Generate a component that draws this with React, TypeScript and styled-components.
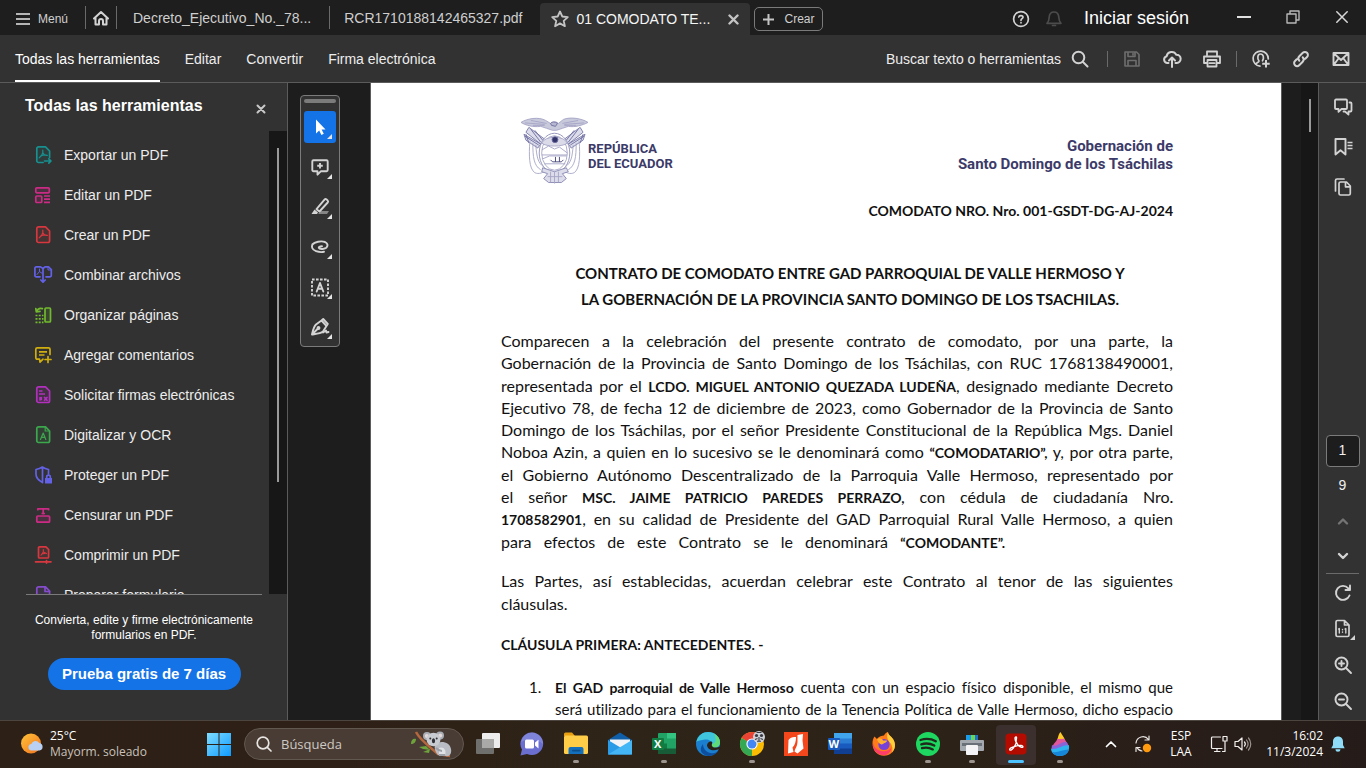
import React from "react";
import styled, { createGlobalStyle } from "styled-components";

const GlobalStyle = createGlobalStyle`
  * { box-sizing: border-box; }
  html, body { margin: 0; padding: 0; background: #1d1d1d; }
  body { font-family: "Liberation Sans", Arial, sans-serif; font-size: 14px; color: #f0f0f0; }
  button, input { font-family: inherit; color: inherit; }
  svg { display: block; flex: none; }
`;

/* ---------- shared pieces ---------- */

type IconProps = {
  w?: number;
  h?: number;
  color?: string;
  sw?: number;
  children: React.ReactNode;
};

const Icon = ({ w = 20, h = 20, color = "#d3d3d3", sw = 2, children }: IconProps) => (
  <svg
    width={w}
    height={h}
    viewBox={`0 0 ${w} ${h}`}
    fill="none"
    stroke={color}
    strokeWidth={sw}
    strokeLinecap="round"
    strokeLinejoin="round"
    aria-hidden="true"
  >
    {children}
  </svg>
);

const PlainButton = styled.button`
  display: flex;
  align-items: center;
  justify-content: center;
  flex: none;
  padding: 0;
  border: 0;
  background: none;
`;

const Screen = styled.div`
  display: flex;
  flex-direction: column;
  height: 100vh;
  overflow: hidden;
`;

/* ---------- title bar ---------- */

const TitleBar = styled.header`
  display: flex;
  align-items: center;
  flex: none;
  height: 35px;
  padding-left: 16px;
  background: #1e1e1e;
`;

const MenuButton = styled(PlainButton)`
  gap: 8px;
  width: 69px;
  height: 35px;
  justify-content: flex-start;
  padding-top: 2px;
  font-size: 12px;
  color: #d0d0d0;
`;

const HomeButton = styled(PlainButton)`
  width: 32px;
  height: 23px;
  border: solid #6a6a6a;
  border-width: 0 1px;
`;

const Tab = styled(PlainButton)`
  align-self: center;
  height: 23px;
  padding: 0 18px 0 14px;
  font-size: 14px;
  color: #cfcfcf;
`;

const DividedTab = styled(Tab)`
  padding-left: 16px;
  border-right: 1px solid #6a6a6a;
`;

const ActiveTab = styled(Tab)`
  align-self: flex-end;
  gap: 7px;
  width: 210px;
  height: 32px;
  padding: 0 11px;
  border-radius: 4px 4px 0 0;
  background: #323232;
  color: #f5f5f5;
`;

const TabName = styled.span`
  flex: 1;
  text-align: left;
  white-space: nowrap;
`;

const CreateButton = styled(PlainButton)`
  gap: 10px;
  width: 69px;
  height: 24px;
  margin: 3px 0 0 4px;
  border: 1px solid #7a7a7a;
  border-radius: 5px;
  font-size: 12px;
  color: #d0d0d0;
`;

const WindowTools = styled.div`
  display: flex;
  align-items: center;
  margin-left: auto;
  height: 35px;
`;

const TitleIcon = styled(PlainButton)`
  width: 33px;
  height: 35px;
  padding-top: 2px;
`;

const WindowButton = styled(PlainButton)`
  width: 49px;
  height: 35px;
  padding-bottom: 2px;
`;

const SignIn = styled(PlainButton)`
  justify-content: flex-start;
  width: 149px;
  padding: 2px 0 0 14px;
  font-size: 18px;
  color: #ffffff;
`;

/* ---------- toolbar ---------- */

const Toolbar = styled.div`
  display: flex;
  align-items: stretch;
  flex: none;
  height: 48px;
  padding: 0 5px 0 15px;
  border-bottom: 1px solid #5b5b5b;
  background: #323232;
`;

const ToolTabs = styled.nav`
  display: flex;
  gap: 25px;
`;

const ToolTab = styled(PlainButton)<{ $active?: boolean }>`
  padding-top: 2px;
  border-bottom: 2px solid ${(p) => (p.$active ? "#ffffff" : "transparent")};
  font-size: 14px;
  color: ${(p) => (p.$active ? "#ffffff" : "#ededed")};
`;

const ToolActions = styled.div`
  display: flex;
  align-items: center;
  margin-left: auto;
`;

const FindButton = styled(PlainButton)`
  gap: 10px;
  margin-right: 14px;
  font-size: 14px;
  color: #ededed;
`;

const ActionButton = styled(PlainButton)`
  width: 40px;
  height: 40px;
`;

const Divider = styled.span`
  width: 1px;
  height: 16px;
  margin: 0 4px;
  background: #6a6a6a;
`;

/* ---------- workspace ---------- */

const Workspace = styled.div`
  display: flex;
  flex: 1;
  min-height: 0;
  background: #1d1d1d;
`;

const Sidebar = styled.aside`
  display: flex;
  flex-direction: column;
  flex: none;
  width: 288px;
  border-right: 1px solid #5b5b5b;
  background: #323232;
`;

const SideHeader = styled.div`
  display: flex;
  justify-content: space-between;
  flex: none;
  height: 48px;
  padding: 13px 20px 0 25px;
`;

const SideTitle = styled.h2`
  margin: 0;
  font-size: 16px;
  line-height: 20px;
  color: #ffffff;
`;

const CloseButton = styled(PlainButton)`
  width: 12px;
  height: 26px;
`;

const SideScroll = styled.div`
  display: flex;
  flex: 1;
  min-height: 0;
  overflow: hidden;
`;

const ToolList = styled.ul`
  flex: 1;
  margin: 0;
  padding: 4px 0 0 34px;
  list-style: none;
`;

const ToolRow = styled(PlainButton)`
  gap: 10px;
  height: 40px;
  font-size: 14px;
  color: #ededed;
`;

const Track = styled.div<{ $w: number; $right: number; $top: number }>`
  display: flex;
  justify-content: flex-end;
  flex: none;
  width: ${(p) => p.$w}px;
  padding: ${(p) => p.$top}px ${(p) => p.$right}px 0 0;
  background: #171717;
`;

const Thumb = styled.span<{ $h: number }>`
  width: 2px;
  height: ${(p) => p.$h}px;
  background: #9a9a9a;
`;

const Promo = styled.div`
  display: flex;
  flex-direction: column;
  align-items: center;
  flex: none;
  height: 126px;
  margin: 0 25px 0 26px;
  border-top: 1px solid #7a7a7a;
`;

const PromoText = styled.p`
  margin: 18px 0 15px;
  font-size: 12px;
  line-height: 15px;
  text-align: center;
  white-space: nowrap;
  color: #ffffff;
`;

const TrialButton = styled(PlainButton)`
  width: 193px;
  height: 32px;
  padding-bottom: 2px;
  border-radius: 16px;
  background: #1473e6;
  font-size: 15px;
  font-weight: 700;
  color: #ffffff;
`;

const Gutter = styled.div`
  flex: none;
  width: 83px;
  padding: 12px 30px 0 12px;
  border-right: 1px solid #5b5b5b;
`;

const Palette = styled.div`
  display: flex;
  flex-direction: column;
  align-items: center;
  gap: 8px;
  width: 40px;
  padding: 3px 0;
  border: 1px solid #7b7b7b;
  border-radius: 4px;
  background: #323232;
`;

const Grip = styled.span`
  width: 32px;
  height: 4px;
  border-radius: 2px;
  background: #7b7b7b;
`;

const PaletteButton = styled(PlainButton)<{ $active?: boolean }>`
  width: 32px;
  height: 32px;
  border-radius: 3px;
  background: ${(p) => (p.$active ? "#1473e6" : "transparent")};
`;

const PageMargin = styled.div`
  flex: none;
  width: 20px;
  border-left: 1px solid #5b5b5b;
`;

const Rail = styled.aside`
  display: flex;
  flex-direction: column;
  justify-content: space-between;
  align-items: center;
  flex: none;
  width: 48px;
  padding: 4px 0 1px;
  border-left: 1px solid #5b5b5b;
  background: #323232;
`;

const RailGroup = styled.div`
  display: flex;
  flex-direction: column;
  align-items: center;
`;

const RailButton = styled(PlainButton)<{ $h: number }>`
  width: 40px;
  height: ${(p) => p.$h}px;
`;

const PageInput = styled.input`
  width: 34px;
  height: 32px;
  padding: 0 0 2px;
  border: 1px solid #7b7b7b;
  border-radius: 4px;
  background: #1d1d1d;
  font-size: 14px;
  text-align: center;
`;

const PageTotal = styled.span`
  font-size: 14px;
  line-height: 36px;
`;

const RailRule = styled.span`
  width: 33px;
  height: 1px;
  margin-bottom: 1px;
  background: #6a6a6a;
`;

/* ---------- document ---------- */

const Page = styled.article`
  flex: 1;
  min-width: 0;
  overflow: hidden;
  padding: 34px 108px 0 130px;
  background: #ffffff;
  color: #111111;
  font-family: Lato, "Open Sans", sans-serif;
  font-size: 15px;
  font-variant-ligatures: none;
`;

const Letterhead = styled.div`
  display: flex;
  justify-content: space-between;
  height: 83px;
  padding-left: 20px;
  font-family: Roboto, sans-serif;
  font-weight: 700;
  color: #3b3a68;
`;

const Brand = styled.div`
  display: flex;
`;

const BrandName = styled.div`
  padding-top: 24px;
  font-size: 13px;
  line-height: 15px;
  white-space: nowrap;
`;

const Office = styled.div`
  padding-top: 20px;
  font-size: 15px;
  line-height: 18px;
  text-align: right;
  white-space: nowrap;
`;

const RefNumber = styled.p`
  margin: 0;
  font-size: 14px;
  font-weight: 700;
  line-height: 22px;
  text-align: right;
`;

const DocTitle = styled.h1`
  margin: 38px 0 18px 26px;
  font-size: 15px;
  font-weight: 700;
  line-height: 26px;
  text-align: center;
  white-space: nowrap;
`;

const Paragraph = styled.div<{ $h: number; $gap: number }>`
  display: grid;
  grid-auto-rows: 1fr;
  height: ${(p) => p.$h}px;
  margin-bottom: ${(p) => p.$gap}px;
  font-size: 16px;
  line-height: 22px;
`;

const Line = styled.span<{ $natural?: boolean; $max?: number }>`
  display: block;
  max-width: ${(p) => (p.$max ? `${p.$max}px` : "none")};
  white-space: nowrap;
  text-align: justify;
  text-align-last: ${(p) => (p.$natural ? "left" : "justify")};

  strong { font-size: 14px; line-height: 16px; }
`;

const ClauseTitle = styled.h2`
  margin: 0 0 20px;
  font-size: 14px;
  line-height: 22px;
`;

const Clauses = styled.ol`
  margin: 0;
  padding-left: 28px;
  line-height: 22px;
  list-style: none;
  counter-reset: clause;
`;

const Clause = styled.li`
  display: grid;
  grid-template-columns: 26px 1fr;
  counter-increment: clause;

  &::before { content: counter(clause) "."; }
`;

/* ---------- taskbar ---------- */

const Taskbar = styled.footer`
  display: flex;
  align-items: center;
  flex: none;
  height: 48px;
  border-top: 1px solid #4b443f;
  background: linear-gradient(90deg, #2d2016 0%, #2e2016 25%, #2e2418 45%, #2c2217 70%, #291e19 85%, #251c19 100%);
  font-family: "Open Sans", "Noto Sans", sans-serif;
  font-size: 12px;
  line-height: 16px;
  color: #ffffff;
`;

const Weather = styled(PlainButton)`
  gap: 7px;
  width: 197px;
  padding: 0 0 2px 20px;
  justify-content: flex-start;
  text-align: left;
  font-size: 12px;
  line-height: 16px;
`;

const Muted = styled.span`
  display: block;
  color: #c9c2bc;
`;

const StartButton = styled(PlainButton)`
  width: 44px;
  height: 47px;
  padding-bottom: 2px;
`;

const SearchBox = styled.label`
  display: flex;
  align-items: center;
  flex: none;
  gap: 9px;
  width: 220px;
  height: 32px;
  margin: 0 2px 1px 3px;
  padding: 0 10px 0 11px;
  border: 1px solid #615850;
  border-radius: 16px;
  background: #483c34;
`;

const SearchInput = styled.input`
  flex: 1;
  min-width: 0;
  padding: 0;
  border: 0;
  outline: 0;
  background: none;
  font-size: 13px;

  &::placeholder { color: #cfc8c3; opacity: 1; }
`;

const AppButton = styled(PlainButton)<{ $mark?: "open" | "active" }>`
  flex-direction: column;
  justify-content: flex-end;
  gap: 3px;
  width: 40px;
  height: 40px;
  margin: 0 2px;
  padding-bottom: 2px;
  border-radius: 4px;
  background: ${(p) => (p.$mark === "active" ? "#3b302d" : "transparent")};

  &::after {
    content: "";
    width: ${(p) => (p.$mark === "active" ? "16px" : "6px")};
    height: 3px;
    border-radius: 2px;
    background: ${(p) => (p.$mark === "active" ? "#4cc2ff" : p.$mark ? "#9b948f" : "transparent")};
  }
`;

const Tray = styled.div`
  display: flex;
  align-items: center;
  margin-left: auto;
  padding: 0 13px 1px 0;
`;

const TrayButton = styled(PlainButton)<{ $w: number }>`
  width: ${(p) => p.$w}px;
  height: 40px;
`;

const TrayText = styled(PlainButton)<{ $w: number; $end?: boolean }>`
  display: block;
  width: ${(p) => p.$w}px;
  font-size: 12px;
  line-height: 16px;
  text-align: ${(p) => (p.$end ? "right" : "center")};
`;

/* ---------- drawings ---------- */

const Squiggle = () => (
  <path
    strokeWidth="1.2"
    d="M8.8 5v2.6C8.4 9.5 7 11.6 5.2 12.8M8.8 7.8C9.6 9.6 11.2 10.6 13.4 10.4M6.6 11C8.2 10.3 10.4 9.9 12.2 10"
  />
);

const sheet =
  "M4.5 1.8H11.5L15.6 6v9.8a1.7 1.7 0 0 1-1.7 1.7H4.5a1.7 1.7 0 0 1-1.7-1.7V3.5a1.7 1.7 0 0 1 1.7-1.7z";

const toolRows: { label: string; color: string; art: React.ReactNode }[] = [
  {
    label: "Exportar un PDF",
    color: "#17908f",
    art: (
      <>
        <path fill="#17908f" fillOpacity=".12" stroke="none" d="M3 2h9l4 4v8l-5 4H3z" />
        <path d="M9 17.5H4.5a1.7 1.7 0 0 1-1.7-1.7V3.5a1.7 1.7 0 0 1 1.7-1.7H11.5L15.6 6v6.5" />
        <Squiggle />
        <path d="M10.500 16h6M14.8 13.8 17 16l-2.200 2.200" />
      </>
    ),
  },
  {
    label: "Editar un PDF",
    color: "#cc2b85",
    art: (
      <>
        <rect x="1.8" y="2.8" width="13.5" height="5" rx="1" fill="#cc2b85" fillOpacity=".15" />
        <rect x="1.8" y="11" width="6" height="6.5" rx="1" fill="#cc2b85" fillOpacity=".15" />
        <path strokeLinecap="butt" d="M10 11h6M10 14.2h6M10 17.4h6" />
      </>
    ),
  },
  {
    label: "Crear un PDF",
    color: "#d7373f",
    art: (
      <>
        <path fill="#d7373f" fillOpacity=".12" d={sheet} />
        <Squiggle />
      </>
    ),
  },
  {
    label: "Combinar archivos",
    color: "#6361e6",
    art: (
      <>
        <path d="M6 11.8H2.2a1.300 1.300 0 0 1-1.300-1.300V3.2A1.300 1.300 0 0 1 2.2 1.900H6.500L9 3.500 11 1.900H14.500L17.300 4.500V10.500a1.300 1.300 0 0 1-1.300 1.300H12" />
        <path strokeWidth="1" d="M14 2v3h3M5.5 4v2.500L3 9.500M5.5 6.500 8 8.300" />
        <path d="M9 4v12.500M6.800 15 9 17.200 11.2 15" />
      </>
    ),
  },
  {
    label: "Organizar páginas",
    color: "#72b92f",
    art: (
      <>
        <rect x="11" y="3" width="5.5" height="14" rx="1" fill="#72b92f" fillOpacity=".15" />
        <path d="M1.800 3.500 2.300 7 6 6.300M2.500 6.500C3.500 4 6 2.800 8.500 3.600" />
        <path strokeLinecap="butt" strokeDasharray="2 1.2" d="M1.500 10.500h8M1.500 17.3h8M1.500 13.900h8" />
      </>
    ),
  },
  {
    label: "Agregar comentarios",
    color: "#cfae0d",
    art: (
      <>
        <path d="M9 14.2 6 17.2 5.5 14.2H3.2A1.4 1.4 0 0 1 1.8 12.8V4.2A1.4 1.4 0 0 1 3.2 2.8H14.6A1.4 1.4 0 0 1 16 4.2V9.5" />
        <path strokeLinecap="butt" d="M5 6.8h8M5 10h5.500" />
        <path d="M14 11.5v6M11 14.5h6" />
      </>
    ),
  },
  {
    label: "Solicitar firmas electrónicas",
    color: "#b130bd",
    art: (
      <>
        <path fill="#b130bd" fillOpacity=".12" d={sheet} />
        <path strokeLinecap="butt" d="M5 6h3.500M5 9h6" />
        <path d="M6 12.5v2.500M7.300 12.5v2M10.500 12.5l2.500 2.800M13 12.5l-2.500 2.800" />
      </>
    ),
  },
  {
    label: "Digitalizar y OCR",
    color: "#3da74e",
    art: (
      <>
        <path fill="#3da74e" fillOpacity=".12" d={sheet} />
        <path strokeWidth="1.2" d="M11.2 2v4h4.200M6.500 14.500 9.2 8l2.600 6.500M7.500 12.300h3.500" />
      </>
    ),
  },
  {
    label: "Proteger un PDF",
    color: "#6361e6",
    art: (
      <>
        <path d="M8.500 17.500C4.500 15.500 2 12.500 2 9V4.500C4.500 4 6.500 3.200 8.300 2 10.200 3.200 12.300 4 14.500 4.500V9M8.500 2.500v15" />
        <path fill="#6361e6" stroke="none" d="M11 13h7v5.500h-7z" />
        <path d="M12.700 13v-1a1.800 1.800 0 0 1 3.600 0v1" />
      </>
    ),
  },
  {
    label: "Censurar un PDF",
    color: "#cc2b85",
    art: (
      <>
        <rect x="2.8" y="11" width="12.8" height="6.2" rx="1" fill="#cc2b85" fillOpacity=".15" />
        <path strokeLinecap="butt" d="M9.200 4v5.500M3.800 5.500V3.800h10.800v1.700M7.500 8.500h3.500" />
      </>
    ),
  },
  {
    label: "Comprimir un PDF",
    color: "#d7373f",
    art: (
      <>
        <path
          fill="#d7373f"
          fillOpacity=".12"
          d="M5.500 1.800H12L14.600 4.500v7.500a1 1 0 0 1-1 1H5.500a1 1 0 0 1-1-1V2.800a1 1 0 0 1 1-1z"
        />
        <path strokeWidth="1.1" d="M9.300 4.500v2.500L7 10.200M9.300 7 12.500 8.600M8 9l3-.6" />
        <path d="M1.500 16.800h15.500M12.500 15.500v2.600" />
      </>
    ),
  },
  {
    label: "Preparar formulario",
    color: "#864ccc",
    art: (
      <>
        <path fill="#864ccc" fillOpacity=".12" d={sheet} />
        <path d="M11 2v4.500h4.500" />
      </>
    ),
  },
];

const Corner = () => <path fill="#e4e4e4" stroke="none" d="M28 23v5h-5z" />;

const paletteTools: { label: string; art: React.ReactNode }[] = [
  {
    label: "Seleccionar",
    art: (
      <path fill="#ffffff" stroke="none" d="M12 8.500V22.500L15.200 19.500 17.400 24 19.800 22.800 17.600 18.600H21.500z" />
    ),
  },
  {
    label: "Agregar comentario",
    art: (
      <>
        <path d="M9.500 9.300h13a1.200 1.200 0 0 1 1.200 1.200v8.500a1.200 1.200 0 0 1-1.200 1.200H17L13.500 23.700V20.200H9.500a1.200 1.200 0 0 1-1.200-1.200V10.500a1.200 1.200 0 0 1 1.200-1.200z" />
        <path strokeLinecap="butt" d="M16 12v5.600M13.200 14.800h5.600" />
      </>
    ),
  },
  {
    label: "Resaltar",
    art: (
      <>
        <path fill="#858585" stroke="none" d="M17 20h8l-2 3H14z" />
        <path d="M12.500 18.200 20.500 8.700A1.500 1.500 0 0 1 22.600 8.500L23.600 9.400A1.500 1.500 0 0 1 23.700 11.500L15.500 20.500z" />
        <path fill="#d3d3d3" stroke="none" d="M10.500 18.500 14 21.500 13 23H7.500z" />
      </>
    ),
  },
  {
    label: "Dibujar",
    art: (
      <path d="M8.300 13.500C10.500 11 17 9.500 21 11 25 13 24 17 19.500 17.800 14 18.600 13 15.600 18 15.300M8.800 13C7 15.500 8 18.800 12 20.200 15 21.200 18 21.200 20 20.800" />
    ),
  },
  {
    label: "Seleccionar texto",
    art: (
      <>
        <rect x="8" y="8.500" width="16" height="16" strokeLinecap="butt" strokeDasharray="2.6 1.4" />
        <path d="M12.700 20.500 16 12 19.300 20.500M13.800 17.800h4.400" />
      </>
    ),
  },
  {
    label: "Firmar",
    art: (
      <>
        <path d="M8 23.500C9 19 9.500 16 12 13.500L17.500 9.500 22.500 15 19 20.500C16.500 22.500 12.500 22.800 8 23.500zM8.500 23 13.500 18M17.500 9.500 19.200 8 23.800 13 22.500 15" />
        <circle cx="14.5" cy="17" r="1" />
        <path d="M19 21.500 22 19.500 22.500 21.500 24.500 21" />
      </>
    ),
  },
];

const Emblem = () => (
  <svg width="67" height="68" viewBox="0 0 68 68" fill="none" stroke="#a4a4c6" strokeWidth=".9" aria-hidden="true">
    <path fill="#c9c9dc" d="M0 5C6 1 18-1 25 3L30 6C33 4 36 4 38 6L43 2C50-1 62 1 68 5 62 8 55 10 48 9L42 11 36 13H32L26 11 20 9C12 10 5 8 0 5z" />
    <path d="M4 5.500 24 7M44 7 64 5.500M10 3 26 6M42 6 58 3M12 8 24 8M44 8 56 8" />
    <path stroke="#6c6ca0" fill="#b6b6d0" d="M30 6C31 4 35 4 37 6L35 9 31 8z" />
    <path stroke="#7676a6" fill="#dcdcea" d="M8 10 24 22 20 27 5 15zM60 10 44 22 48 27 63 15zM3 17 20 27 17 31 5 23zM65 17 48 27 51 31 63 23z" />
    <path stroke="#6b6ba0" d="M10 12 20 25M14 13 22 23M58 12 48 25M54 13 46 23M5 17 8 26M63 17 60 26M4 19 18 28M64 19 50 28" />
    <ellipse cx="34" cy="36" rx="15.5" ry="20" fill="#ffffff" stroke="#8d8db8" />
    <ellipse cx="34" cy="36" rx="13" ry="17.5" />
    <path fill="#dadae8" d="M21 26C24 18 44 18 47 26 42 30 26 30 21 26z" />
    <circle cx="34.5" cy="22.5" r="3" fill="#32326a" stroke="#6c6ca0" />
    <path d="M21 33 28 29 34 32 39 30 47 36M21 38H47M22 42 29 39H46M24 47H45" />
    <path stroke="#3c3c75" d="M30 43 32 45H41L43 43M35 40v5M39 40v5" />
    <path d="M9 24C8 38 8 52 14 56 18 58 23 56 26 53M12 26C12 40 13 49 20 53M15 28C16 40 17 46 23 50M59 24C60 38 60 52 54 56 50 58 45 56 42 53M56 26C56 40 55 49 48 53M53 28C52 40 51 46 45 50" />
    <path stroke="#8484b0" fill="#dcdcea" d="M22 51 34 55 46 51 48 55 42 57 46 62 41 66H28L23 62 27 57 21 55z" />
    <path d="M30 55V66M34 55V67M38 55V66M27 60H42" />
  </svg>
);

const Art = ({ children }: { children: React.ReactNode }) => (
  <svg width="26" height="26" viewBox="0 0 26 26" aria-hidden="true">
    {children}
  </svg>
);

const Tile = styled.text`
  font: 700 11px "Open Sans", sans-serif;
  fill: #ffffff;
`;

const apps: { label: string; mark?: "open" | "active"; art: React.ReactNode }[] = [
  {
    label: "Vista de tareas",
    art: (
      <>
        <rect x="7" y="2" width="18" height="15" rx="1" fill="#ececec" />
        <rect x="1" y="8" width="18" height="15" rx="1" fill="#6f6f6d" />
        <rect x="7" y="8" width="12" height="9" fill="#a9a9a8" />
      </>
    ),
  },
  {
    label: "Chat",
    art: (
      <>
        <path fill="#6a6fd0" d="M13 1.500A11.300 11.300 0 1 1 8 23L1.500 24.500 3 18.500A11.300 11.300 0 0 1 13 1.500z" />
        <path fill="#8e92e2" opacity=".6" d="M13 1.500A11.300 11.300 0 0 1 24 13C18 8 9 7 2 11A11.300 11.300 0 0 1 13 1.500z" />
        <rect x="6" y="8.500" width="9" height="9" rx="1.500" fill="#ffffff" />
        <path fill="#ffffff" d="M16 11.500 19.500 8.800V17.500L16 14.600z" />
      </>
    ),
  },
  {
    label: "Explorador de archivos",
    mark: "open",
    art: (
      <>
        <path fill="#e8a010" d="M1 3a1.500 1.500 0 0 1 1.500-1.500H9L12 5H1z" />
        <rect x="1" y="4.500" width="24" height="18.500" rx="1.500" fill="#ffcd48" />
        <path fill="#1470bd" d="M5.500 23V18a2 2 0 0 1 2-2h11a2 2 0 0 1 2 2v5z" />
        <rect x="9" y="18.800" width="8.500" height="1.800" rx=".8" fill="#0b4f8c" />
      </>
    ),
  },
  {
    label: "Correo",
    art: (
      <>
        <path fill="#0f5ea8" d="M1 9 13 1.500 25 9v3H1z" />
        <path fill="#f1f3f6" d="M3 8.500H23V13L13 19 3 13z" />
        <path fill="#2a9be6" d="M1 9 25 23.500H1z" />
        <path fill="#45b6f5" d="M25 9 1 23.500H25z" />
      </>
    ),
  },
  {
    label: "Excel",
    mark: "open",
    art: (
      <>
        <rect x="7" y="2" width="18" height="21" rx="1" fill="#21a366" />
        <path fill="#33c481" d="M16 2h9v5.500h-9z" />
        <path fill="#107c41" d="M7 12.500h9v5.500H7z" />
        <path fill="#185c37" d="M7 17.500h18V23H7z" />
        <rect x="1" y="7" width="12" height="12" rx="1" fill="#107c41" />
        <Tile x="3" y="17">X</Tile>
      </>
    ),
  },
  {
    label: "Edge",
    art: (
      <>
        <circle cx="13" cy="13" r="12" fill="#1b7fcf" />
        <path fill="#3fc6dc" d="M1.300 11C3 4 8 1 13 1c7 0 12 5 12 10.500 0 3-2.500 5-5.500 5-4 0-3.500-2-2.500-3.500 0-3.500-4-5-7-4.500-4 .5-7 1-8.700 2.500z" />
        <path fill="#5fdc7a" d="M19 2.600C23 5 25 8 25 11.500c0 3-2.500 5-5.500 5-4 0-3.500-2-2.500-3.500 4 0 5-5 2-10.400z" />
        <path fill="#0d4f9e" d="M8 13c0 6 5 9.500 9.500 9.200 2.500 0 5-1.200 6-2.700C21 23.500 17 25 13 25 7 24 3 19 8 13z" />
        <path fill="#2b2217" d="M16.500 10.500C14 10.200 12 12 12 14.500 12.500 18 17 20.500 22.800 18.600L25.500 18V15C22 17.500 16 17 16.800 13.200 17.600 12 17.500 11 16.500 10.500z" />
      </>
    ),
  },
  {
    label: "Chrome",
    mark: "open",
    art: (
      <>
        <circle cx="13" cy="13" r="12" fill="#fbbc04" />
        <path fill="#ea4335" d="M13 13 2.600 7A12 12 0 0 1 23.400 7z" />
        <path fill="#34a853" d="M13 13 2.600 7A12 12 0 0 0 13 25z" />
        <path fill="#ea4335" d="M8 10H23.400V7H5z" />
        <circle cx="13" cy="13" r="5.600" fill="#ffffff" />
        <circle cx="13" cy="13" r="4.500" fill="#4285f4" />
        <circle cx="20" cy="6" r="6" fill="#cfd2d8" />
        <circle cx="17.5" cy="4.500" r="1.600" fill="#3a3b42" />
        <circle cx="22.5" cy="4.500" r="1.600" fill="#3a3b42" />
        <path stroke="#3a3b42" strokeWidth="1.100" fill="none" d="M16 8.500 18.500 7.500M24 8.500 21.500 7.500M20 6v4M17.500 1.500h5M18 10.300h4" />
      </>
    ),
  },
  {
    label: "Nitro PDF",
    art: (
      <>
        <rect x="1" y="1" width="24" height="24" fill="#f4471c" />
        <path fill="#ffffff" d="M5.500 9C7 6.500 10 5.500 13 6 13 10.500 12 14 9.500 16.500L10.500 21 5 22.500z" />
        <path fill="#ffffff" d="M14.500 4 20 3 19.500 9.500 20.500 17.500 14.500 22.500 11.500 20.500C12 17.500 14.500 15 14.500 11z" />
      </>
    ),
  },
  {
    label: "Word",
    art: (
      <>
        <rect x="7" y="2" width="18" height="21" rx="1" fill="#2b7cd3" />
        <path fill="#41a5ee" d="M7 2h18v5.500H7z" />
        <path fill="#185abd" d="M7 12.500h18v5.500H7z" />
        <path fill="#103f91" d="M7 17.500h18V23H7z" />
        <rect x="1" y="7" width="12" height="12" rx="1" fill="#185abd" />
        <Tile x="1.5" y="17">W</Tile>
      </>
    ),
  },
  {
    label: "Firefox",
    art: (
      <>
        <path fill="#ff7a1a" d="M3.500 5.500 6 8C8 5 11 4.500 13 4.500 14 2.500 16 1 17 1c0 3 3 4 5 7 3 4.500 2.500 10-1 13.500-5 5-13 4-17-1C1 16 .5 10 3.500 5.500z" />
        <path fill="#ffce3a" d="M17 1c0 3 3 4 5 7 3 4.500 2.500 10-1 13.500 1-5 0-8-3-11C16 8 15.500 4 17 1z" />
        <path fill="#ff3d6a" d="M2 12C3 18 9 20.500 13 20.300c3 0 6-1.300 7.500-3.800C20 22 15 25 11 24 5 23 1.500 18 2 12z" />
        <circle cx="13" cy="13.500" r="5.600" fill="#7541d6" />
        <path fill="#ffb02e" d="M6 8C8 6.500 11 7 12 9.500H16C16 11.500 13 12 12 13 10 14.500 7 12 6 8z" />
      </>
    ),
  },
  {
    label: "Spotify",
    mark: "open",
    art: (
      <>
        <circle cx="13" cy="13" r="12" fill="#1ed760" />
        <path
          fill="none"
          stroke="#1f2a1c"
          strokeLinecap="round"
          strokeWidth="2.3"
          d="M5.500 9C11 7.300 16.500 7.900 20.800 10.300M6.300 13.300C11 11.900 15.500 12.500 19.300 14.600M7 17.200C11 16.100 14.500 16.600 17.800 18.400"
        />
      </>
    ),
  },
  {
    label: "Impresora",
    mark: "open",
    art: (
      <>
        <path fill="#1c9be8" d="M7 4h5v6H7z" />
        <path fill="#6bd64f" d="M12 4h4v6h-4z" />
        <path fill="#1f6fc9" d="M16 4h3v6h-3z" />
        <rect x="1" y="9" width="24" height="11" rx="1" fill="#a4a9b0" />
        <path fill="#6a7078" d="M3 12h20v3H3z" />
        <rect x="7" y="14" width="12" height="10" rx="1" fill="#f4f4f6" />
      </>
    ),
  },
  {
    label: "Adobe Acrobat",
    mark: "active",
    art: (
      <>
        <rect x="2.500" y="2.500" width="21" height="21" rx="4" fill="#b30b00" />
        <path
          fill="none"
          stroke="#ffffff"
          strokeWidth="1.3"
          d="M13 6C11.600 6 11.700 8.500 13.300 11.700 12 14.800 9.900 18.300 8 19.100 6.600 19.600 6 18.200 7.600 17.100 10 15.400 15.300 14.100 18.300 14.500 20.800 14.900 20.300 16.800 18.500 16.300 16 15.600 14 13 13.300 11 12.700 9 14.400 6 13 6z"
        />
      </>
    ),
  },
  {
    label: "Paint 3D",
    mark: "open",
    art: (
      <>
        <path fill="#ffc928" d="M13.500 1C11 4 11.500 6 10 9h8C16.500 5 15 4 13.500 1z" />
        <path fill="#e0559c" d="M10.500 7.500C12 9 16 7 17.500 8L22 15 5.500 15.500C6.500 12 9.500 11 10.500 7.500z" />
        <path fill="#8b63d8" d="M5 14C10 17 15 9 20 11.500L22 17 17 18 4.500 18z" />
        <path fill="#2fb3f0" d="M4 17.500C9 20 16 13 22 14.500 23 21 18 25 13 25S4 22 4 17.500z" />
        <path fill="#1687d8" d="M5.500 21C11 22 17 18 22 18.500 21 23 17 25 13 25S6.500 23.500 5.500 21z" />
      </>
    ),
  },
];

/* ---------- application ---------- */

export default function App() {
  return (
    <Screen>
      <GlobalStyle />

      <TitleBar>
        <MenuButton>
          <Icon w={14} h={14} color="#b5b5b5">
            <path strokeLinecap="butt" d="M0 2h14M0 7h14M0 12h14" />
          </Icon>
          Menú
        </MenuButton>
        <HomeButton aria-label="Inicio">
          <Icon w={18} h={18}>
            <path d="M2 9.500 9 3 16 9.500M3.500 9v6.500h3.500V12a2 2 0 0 1 4 0V15.500h3.500V9" />
          </Icon>
        </HomeButton>
        <DividedTab>Decreto_Ejecutivo_No._78...</DividedTab>
        <Tab>RCR1710188142465327.pdf</Tab>
        <ActiveTab>
          <Icon w={18} h={18} sw={1.8} color="#c4c4c4">
            <path d="M9 1.500 11.300 6.500 16.800 7.100 12.700 10.800 13.900 16.200 9 13.400 4.100 16.200 5.300 10.800 1.200 7.100 6.700 6.500z" />
          </Icon>
          <TabName>01 COMODATO TE...</TabName>
          <Icon w={11} h={11} sw={2.4} color="#c4c4c4">
            <path d="M1.500 1.500l8 8M9.500 1.500l-8 8" />
          </Icon>
        </ActiveTab>
        <CreateButton>
          <Icon w={11} h={11} color="#c4c4c4">
            <path strokeLinecap="butt" d="M5.500 0v11M0 5.500h11" />
          </Icon>
          Crear
        </CreateButton>
        <WindowTools>
          <TitleIcon aria-label="Ayuda">
            <Icon w={18} h={18} sw={1.7}>
              <circle cx="9" cy="9" r="7.4" />
              <path d="M6.800 7C7 5.300 11 5 11 7.200 11 8.700 9 8.500 9 10.300M9 12.600v.2" />
            </Icon>
          </TitleIcon>
          <TitleIcon aria-label="Notificaciones">
            <Icon w={18} h={18} sw={1.7} color="#4c4c4c">
              <path d="M2 13.300C4 11.500 4 10 4.200 7 4.500 3.500 6.500 2 9 2s4.500 1.500 4.800 5c.2 3 .2 4.500 2.200 6.300zM7.500 15.500h3" />
            </Icon>
          </TitleIcon>
          <SignIn>Iniciar sesión</SignIn>
          <WindowButton aria-label="Minimizar">
            <Icon w={14} h={2} color="#e0e0e0">
              <path strokeLinecap="butt" d="M0 1h14" />
            </Icon>
          </WindowButton>
          <WindowButton aria-label="Restaurar">
            <Icon w={14} h={14} sw={1.4} color="#b8b8b8">
              <path d="M1 4h9v9H1zM4 3.500V1h9v9h-2.500" />
            </Icon>
          </WindowButton>
          <WindowButton aria-label="Cerrar">
            <Icon w={12} h={12} sw={1.5} color="#d8d8d8">
              <path d="M.8.8l10.400 10.400M11.200.8.8 11.200" />
            </Icon>
          </WindowButton>
        </WindowTools>
      </TitleBar>

      <Toolbar>
        <ToolTabs>
          <ToolTab $active>Todas las herramientas</ToolTab>
          <ToolTab>Editar</ToolTab>
          <ToolTab>Convertir</ToolTab>
          <ToolTab>Firma electrónica</ToolTab>
        </ToolTabs>
        <ToolActions>
          <FindButton>
            Buscar texto o herramientas
            <Icon w={18} h={18}>
              <circle cx="7.5" cy="7.5" r="5.8" />
              <path d="M12 12l4.500 4.500" />
            </Icon>
          </FindButton>
          <Divider />
          <ActionButton aria-label="Guardar">
            <Icon w={18} h={18} sw={1.6} color="#6e6e6e">
              <path d="M2 2h11.500L16 4.500V16H2zM5 2v4.500h7V2M5 16v-5.500h8V16M10 3.500v1.500" />
            </Icon>
          </ActionButton>
          <ActionButton aria-label="Subir">
            <Icon>
              <path d="M6.500 14H5A3.500 3.500 0 0 1 4.600 7.200 5.200 5.200 0 0 1 14.300 5.800 4.100 4.100 0 0 1 14.800 14H13.500" />
              <path d="M10 18V9M7 11.500 10 8.500 13 11.500" />
            </Icon>
          </ActionButton>
          <ActionButton aria-label="Imprimir">
            <Icon sw={1.8}>
              <path d="M5 6V2.500H15V6M5 14H2V7.500H18V14H15" />
              <path d="M5.500 11h9v6.500h-9zM7.500 14.200h5" />
            </Icon>
          </ActionButton>
          <Divider />
          <ActionButton aria-label="Compartir">
            <Icon sw={1.7}>
              <path d="M9 17.200A7.600 7.600 0 1 1 17.300 10" />
              <path d="M4.800 15C5.500 13.500 8 13.300 8 12 6 9.500 6.500 5 9.500 5s3.800 4 2 6.800" />
              <path strokeLinecap="butt" strokeWidth="2" d="M15 11v7.500M11.200 14.800h7.500" />
            </Icon>
          </ActionButton>
          <ActionButton aria-label="Copiar vínculo">
            <Icon>
              <path d="M8.300 11.700C7 10.400 7 8.600 8.300 7.300L11.800 3.800C13 2.600 14.800 2.600 16 3.800s1.200 3 0 4.200L14.300 9.700M11.700 8.300C13 9.600 13 11.400 11.700 12.700L8.200 16.200C7 17.400 5.200 17.400 4 16.200s-1.200-3 0-4.200L5.700 10.300" />
            </Icon>
          </ActionButton>
          <ActionButton aria-label="Enviar por correo">
            <Icon sw={1.9}>
              <path d="M2.500 4h15v12h-15zM3 4.500 10 11 17 4.500M3 15.500 7.500 9.500M17 15.500 12.500 9.500" />
            </Icon>
          </ActionButton>
        </ToolActions>
      </Toolbar>

      <Workspace>
        <Sidebar>
          <SideHeader>
            <SideTitle>Todas las herramientas</SideTitle>
            <CloseButton aria-label="Cerrar panel">
              <Icon w={10} h={10} color="#c8c8c8">
                <path d="M1.500 1.500l7 7M8.500 1.500l-7 7" />
              </Icon>
            </CloseButton>
          </SideHeader>
          <SideScroll>
            <ToolList>
              {toolRows.map((row) => (
                <li key={row.label}>
                  <ToolRow>
                    <Icon color={row.color} sw={1.7}>
                      {row.art}
                    </Icon>
                    {row.label}
                  </ToolRow>
                </li>
              ))}
            </ToolList>
            <Track $w={18} $right={8} $top={17}>
              <Thumb $h={334} />
            </Track>
          </SideScroll>
          <Promo>
            <PromoText>
              Convierta, edite y firme electrónicamente
              <br />
              formularios en PDF.
            </PromoText>
            <TrialButton>Prueba gratis de 7 días</TrialButton>
          </Promo>
        </Sidebar>

        <Gutter>
          <Palette>
            <Grip />
            {paletteTools.map((tool, i) => (
              <PaletteButton key={tool.label} $active={i === 0} aria-label={tool.label}>
                <Icon w={32} h={32} sw={1.9}>
                  {tool.art}
                  <Corner />
                </Icon>
              </PaletteButton>
            ))}
          </Palette>
        </Gutter>

        <Page>
          <Letterhead>
            <Brand>
              <Emblem />
              <BrandName>
                REPÚBLICA
                <br />
                DEL ECUADOR
              </BrandName>
            </Brand>
            <Office>
              Gobernación de
              <br />
              Santo Domingo de los Tsáchilas
            </Office>
          </Letterhead>
          <RefNumber>COMODATO NRO. Nro. 001-GSDT-DG-AJ-2024</RefNumber>
          <DocTitle>
            CONTRATO DE COMODATO ENTRE GAD PARROQUIAL DE VALLE HERMOSO Y
            <br />
            LA GOBERNACIÓN DE LA PROVINCIA SANTO DOMINGO DE LOS TSACHILAS.
          </DocTitle>
          <Paragraph $h={223} $gap={17}>
            <Line>Comparecen a la celebración del presente contrato de comodato, por una parte, la</Line>
            <Line>Gobernación de la Provincia de Santo Domingo de los Tsáchilas, con RUC 1768138490001,</Line>
            <Line>
              representada por el <strong>LCDO. MIGUEL ANTONIO QUEZADA LUDEÑA</strong>, designado mediante Decreto
            </Line>
            <Line>Ejecutivo 78, de fecha 12 de diciembre de 2023, como Gobernador de la Provincia de Santo</Line>
            <Line>Domingo de los Tsáchilas, por el señor Presidente Constitucional de la República Mgs. Daniel</Line>
            <Line>
              Noboa Azin, a quien en lo sucesivo se le denominará como <strong>“COMODATARIO”,</strong> y, por otra parte,
            </Line>
            <Line>el Gobierno Autónomo Descentralizado de la Parroquia Valle Hermoso, representado por</Line>
            <Line>
              el señor <strong>MSC. JAIME PATRICIO PAREDES PERRAZO,</strong> con cédula de ciudadanía Nro<strong>.</strong>
            </Line>
            <Line>
              <strong>1708582901</strong>, en su calidad de Presidente del GAD Parroquial Rural Valle Hermoso, a quien
            </Line>
            <Line $max={504}>
              para efectos de este Contrato se le denominará <strong>“COMODANTE”.</strong>
            </Line>
          </Paragraph>
          <Paragraph $h={45} $gap={19}>
            <Line>Las Partes, así establecidas, acuerdan celebrar este Contrato al tenor de las siguientes</Line>
            <Line $natural>cláusulas.</Line>
          </Paragraph>
          <ClauseTitle>CLÁUSULA PRIMERA: ANTECEDENTES. -</ClauseTitle>
          <Clauses>
            <Clause>
              <div>
                <Line>
                  <strong>El GAD parroquial de Valle Hermoso</strong> cuenta con un espacio físico disponible, el mismo que
                </Line>
                <Line>será utilizado para el funcionamiento de la Tenencia Política de Valle Hermoso, dicho espacio</Line>
              </div>
            </Clause>
          </Clauses>
        </Page>

        <PageMargin />
        <Track $w={17} $right={7} $top={16}>
          <Thumb $h={33} />
        </Track>

        <Rail>
          <RailGroup>
            <RailButton $h={40} aria-label="Comentarios">
              <Icon sw={1.8}>
                <path d="M3 2.500H13a1 1 0 0 1 1 1V11a1 1 0 0 1-1 1H8.500L5.500 14.800V12H3a1 1 0 0 1-1-1V3.500a1 1 0 0 1 1-1z" />
                <path d="M16.500 5.500H17.500a1 1 0 0 1 1 1V13.500a1 1 0 0 1-1 1H15.500V17.500L12 14.500H10.500" />
              </Icon>
            </RailButton>
            <RailButton $h={40} aria-label="Marcadores">
              <Icon sw={1.9}>
                <path d="M2.500 2H12.500V17.500L7.500 13.300 2.500 17.500z" />
                <path strokeLinecap="butt" d="M14.500 5.500h5M14.500 8.500h5M14.500 11.500h5" strokeWidth="1.5" />
              </Icon>
            </RailButton>
            <RailButton $h={40} aria-label="Páginas">
              <Icon sw={1.7}>
                <path d="M2.500 14V3.500A1.500 1.500 0 0 1 4 2H11" />
                <path d="M7.500 5H13.500L17.300 9V16.500a1.500 1.500 0 0 1-1.500 1.500H7.500A1.500 1.500 0 0 1 6 16.500V6.500A1.500 1.500 0 0 1 7.500 5zM12.500 5.500V9.800H17" />
              </Icon>
            </RailButton>
          </RailGroup>
          <RailGroup>
            <PageInput aria-label="Página actual" defaultValue="1" />
            <PageTotal>9</PageTotal>
            <RailButton $h={36} aria-label="Página anterior">
              <Icon w={12} h={12} sw={2.4} color="#747474">
                <path d="M2 8.500 6 4.500 10 8.500" />
              </Icon>
            </RailButton>
            <RailButton $h={34} aria-label="Página siguiente">
              <Icon w={12} h={12} sw={2.4}>
                <path d="M2 4 6 8 10 4" />
              </Icon>
            </RailButton>
            <RailRule />
            <RailButton $h={36} aria-label="Girar">
              <Icon sw={1.9}>
                <path d="M16.500 12.500A7 7 0 1 1 15.300 5.300M17 2.500V7H12.500" />
              </Icon>
            </RailButton>
            <RailButton $h={36} aria-label="Tamaño real">
              <Icon w={26} h={22} sw={1.7}>
                <path d="M7.500 2.500H14.500L19 7V17a1.500 1.500 0 0 1-1.500 1.500H7.500A1.500 1.500 0 0 1 6 17V4A1.500 1.500 0 0 1 7.500 2.500zM14.500 3V7H18.500" />
                <path strokeWidth="1.4" d="M8.500 11 9.300 10.500V15M15 11l.8-.5V15M12.500 11.500v.2M12.500 14v.2" />
                <path fill="#d3d3d3" stroke="none" d="M25 17v5h-5z" />
              </Icon>
            </RailButton>
            <RailButton $h={36} aria-label="Acercar">
              <Icon sw={1.9}>
                <circle cx="8.500" cy="8.500" r="6" />
                <path d="M13 13l5 5M8.500 6v5M6 8.500h5" />
              </Icon>
            </RailButton>
            <RailButton $h={36} aria-label="Alejar">
              <Icon sw={1.9}>
                <circle cx="8.500" cy="8.500" r="6" />
                <path d="M13 13l5 5M6 8.500h5" />
              </Icon>
            </RailButton>
          </RailGroup>
        </Rail>
      </Workspace>

      <Taskbar>
        <Weather>
          <svg width="23" height="22" viewBox="0 0 23 22" aria-hidden="true">
            <defs>
              <linearGradient id="sun" x1="0" y1="0" x2="1" y2="1">
                <stop offset="0" stopColor="#ffc53a" />
                <stop offset="1" stopColor="#f2701d" />
              </linearGradient>
            </defs>
            <circle cx="11" cy="10.5" r="10" fill="url(#sun)" />
            <path fill="#b9d0f3" d="M11 17.500a3.300 3.300 0 0 1 .3-6.500 4.500 4.500 0 0 1 8-1 3.800 3.800 0 0 1 .2 7.500z" />
          </svg>
          <span>
            25°C
            <Muted>Mayorm. soleado</Muted>
          </span>
        </Weather>
        <StartButton aria-label="Inicio de Windows">
          <svg width="24" height="24" viewBox="0 0 24 24" aria-hidden="true">
            <defs>
              <linearGradient id="win" x1="0" y1="0" x2="1" y2="1">
                <stop offset="0" stopColor="#7fdcff" />
                <stop offset="1" stopColor="#0f9bff" />
              </linearGradient>
            </defs>
            <path fill="url(#win)" d="M0 1h11.500v11H0zM12.500 1H24v11H12.500zM0 13h11.500v11H0zM12.500 13H24v11H12.500z" />
          </svg>
        </StartButton>
        <SearchBox>
          <Icon w={16} h={16} sw={1.7} color="#e8e4e1">
            <circle cx="7" cy="7" r="5.8" />
            <path d="M11.300 11.300l3.700 3.700" />
          </Icon>
          <SearchInput placeholder="Búsqueda" aria-label="Búsqueda" />
          <svg width="43" height="27" viewBox="0 0 43 27" aria-hidden="true">
            <path fill="none" stroke="#b5673e" strokeWidth="2.5" d="M6 1C10 9 19 15 28 23L40 25" />
            <path fill="#6ea43b" d="M1 13C1 9 3 7 6 8 6 11 4 13 1 13zM9 16 16 15 20 19 13 18zM13 21 20 18 19 22z" />
            <path fill="#b9bcc2" d="M25 13C31 9 40 11 41 18 42 23 39 26 36 25L28 24C25 21 24 17 25 13z" />
            <path fill="#dfe1e5" d="M29 17C33 15 37 19 35 24L29 23z" />
            <circle cx="17" cy="5" r="4" fill="#a9adb4" />
            <circle cx="30" cy="4.5" r="4" fill="#a9adb4" />
            <circle cx="16.8" cy="5" r="2" fill="#e3d9db" />
            <circle cx="30.2" cy="4.5" r="2" fill="#e3d9db" />
            <ellipse cx="23.5" cy="8.5" rx="7" ry="6.8" fill="#c8cbd0" />
            <ellipse cx="23.5" cy="9.8" rx="1.6" ry="2.5" fill="#2f3036" />
            <circle cx="20.3" cy="7.5" r="1" fill="#2f3036" />
            <circle cx="26.7" cy="7.5" r="1" fill="#2f3036" />
            <path fill="none" stroke="#9b9fa6" strokeWidth="2" d="M26 17C28 19 29 20 32 20M29 24h6" />
          </svg>
        </SearchBox>
        {apps.map((app) => (
          <AppButton key={app.label} $mark={app.mark} aria-label={app.label}>
            <Art>{app.art}</Art>
          </AppButton>
        ))}
        <Tray>
          <TrayButton $w={32} aria-label="Iconos ocultos">
            <Icon w={12} h={12} sw={1.7} color="#ffffff">
              <path d="M1.500 8.500 6 4 10.500 8.500" />
            </Icon>
          </TrayButton>
          <TrayButton $w={32} aria-label="Actualizaciones">
            <Icon w={18} h={18} sw={1.2} color="#e8e4e1">
              <path d="M2 8A7 7 0 0 1 14.500 4.500M15 1v4h-4M8 16A6.500 6.500 0 0 1 3 12.500M2 16.500V12.500H6" />
              <circle cx="13" cy="13" r="4.2" fill="#ff9a0f" stroke="none" />
            </Icon>
          </TrayButton>
          <TrayText $w={44}>
            ESP
            <br />
            LAA
          </TrayText>
          <TrayButton $w={32} aria-label="Red">
            <Icon w={18} h={18} sw={1.2} color="#f2f0ee">
              <path d="M10.500 2H2.500a1 1 0 0 0-1 1V12.500a1 1 0 0 0 1 1H12M7 13.500v3M4.500 16.500H10M13 1.500h4V6h-4zM15 6v10.500h-2.500" />
            </Icon>
          </TrayButton>
          <TrayButton $w={16} aria-label="Volumen">
            <Icon w={18} h={16} sw={1.2} color="#f2f0ee">
              <path d="M1 5.500H4L8 2V14L4 10.500H1z" />
              <path d="M10.500 6C11.500 7.200 11.500 8.800 10.500 10" />
              <path stroke="#9b948f" d="M12.500 4C14.500 6.500 14.500 9.500 12.500 12M14.500 2C17.500 5.500 17.500 10.500 14.500 14" />
            </Icon>
          </TrayButton>
          <TrayText $w={72} $end>
            16:02
            <br />
            11/3/2024
          </TrayText>
          <TrayButton $w={30} aria-label="Notificaciones del sistema">
            <svg width="14" height="16" viewBox="0 0 14 16" aria-hidden="true">
              <path fill="#8fdcf8" d="M7 .5C3.800.5 2 2.800 2 5.500V9L.3 12.300H13.700L12 9V5.500C12 2.800 10.200.5 7 .5zM4.500 13.300h5a2.500 2.500 0 0 1-5 0z" />
            </svg>
          </TrayButton>
        </Tray>
      </Taskbar>
    </Screen>
  );
}
